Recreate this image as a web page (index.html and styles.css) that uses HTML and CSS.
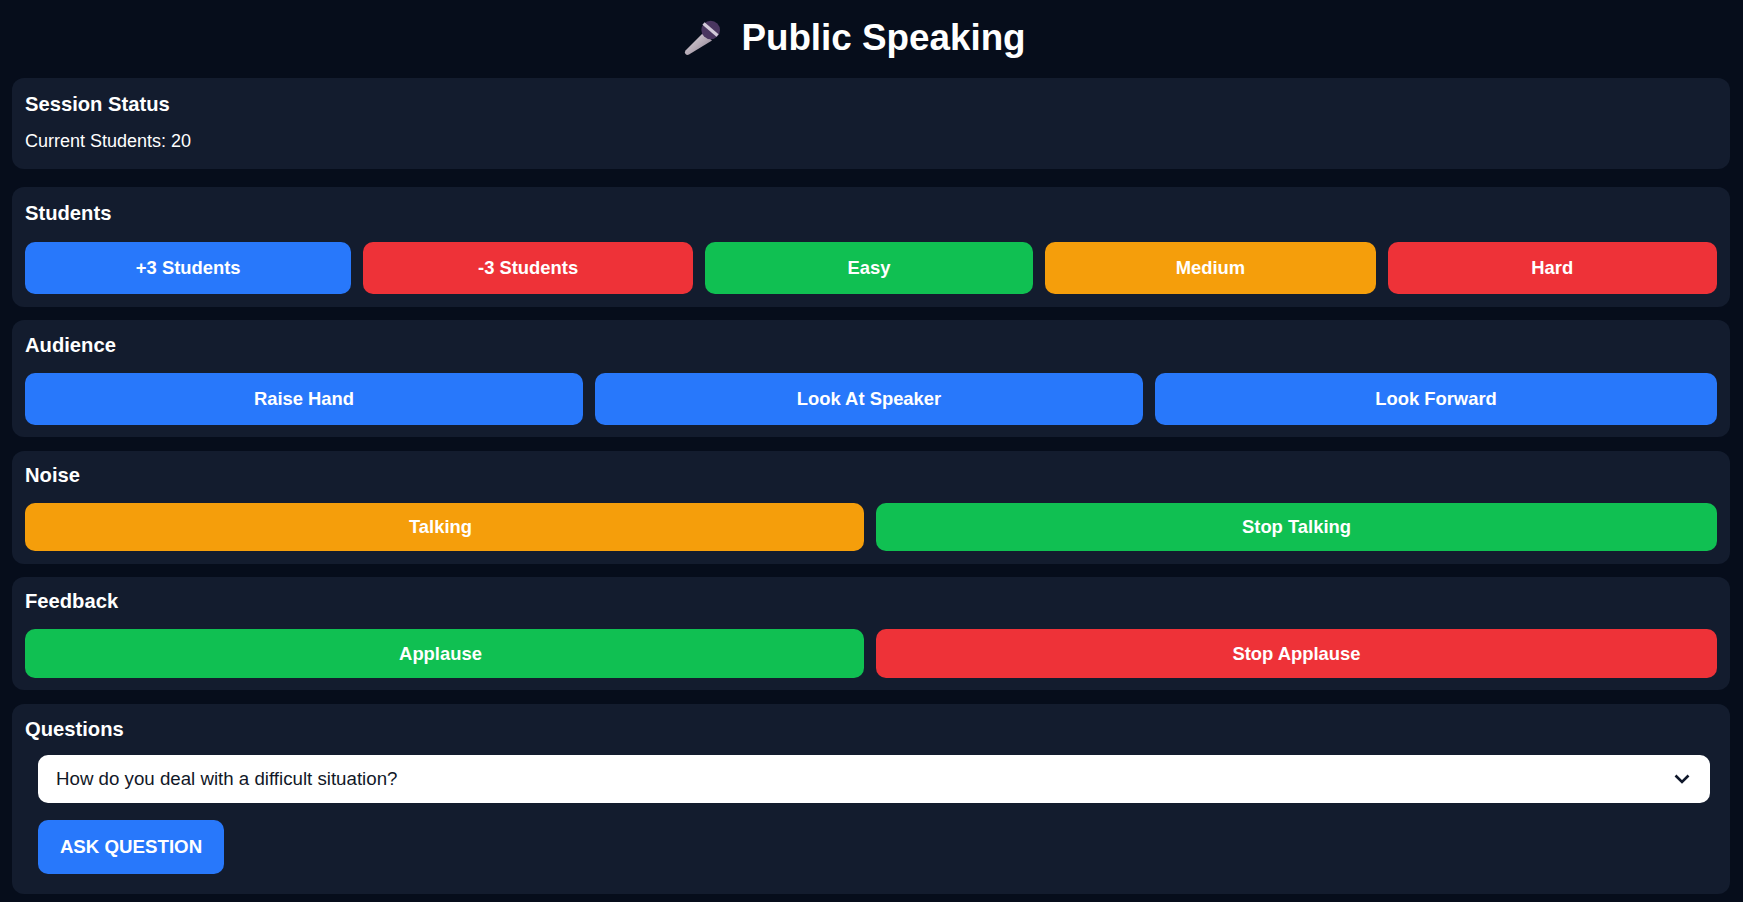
FILE: index.html
```html
<!DOCTYPE html>
<html lang="en">
<head>
<meta charset="utf-8">
<title>Public Speaking</title>
<link rel="stylesheet" href="styles.css">
</head>
<body>
<h1 class="title">
  <svg class="mic" viewBox="0 0 48 44" aria-hidden="true">
    <defs>
      <linearGradient id="h" x1="0" y1="0" x2="1" y2="1"><stop offset="0" stop-color="#e4dee4"/><stop offset="0.55" stop-color="#b3a8b4"/><stop offset="1" stop-color="#7d7384"/></linearGradient>
    </defs>
    <path d="M24 17 L33 24.500 L10 38.500 Q8 39.500 6.500 38 Q5 36.500 6.500 34.500Z" fill="url(#h)"/>
    <circle cx="31.700" cy="14" r="9.300" fill="#4a3660"/>
    <path d="M24.500 7.500 L38.500 19.500" stroke="#d2cad9" stroke-width="3.200" fill="none"/>
  </svg>
  <span>Public Speaking</span>
</h1>
<section class="panel status">
  <h2>Session Status</h2>
  <p>Current Students: 20</p>
</section>
<section class="panel students">
  <h2>Students</h2>
  <div class="row">
    <button class="btn blue">+3 Students</button>
    <button class="btn red">-3 Students</button>
    <button class="btn green">Easy</button>
    <button class="btn amber">Medium</button>
    <button class="btn red">Hard</button>
  </div>
</section>
<section class="panel audience">
  <h2>Audience</h2>
  <div class="row">
    <button class="btn blue">Raise Hand</button>
    <button class="btn blue">Look At Speaker</button>
    <button class="btn blue">Look Forward</button>
  </div>
</section>
<section class="panel noise">
  <h2>Noise</h2>
  <div class="row pair">
    <button class="btn amber">Talking</button>
    <button class="btn green">Stop Talking</button>
  </div>
</section>
<section class="panel feedback">
  <h2>Feedback</h2>
  <div class="row pair">
    <button class="btn green">Applause</button>
    <button class="btn red">Stop Applause</button>
  </div>
</section>
<section class="panel questions">
  <h2>Questions</h2>
  <div class="select">
    <span>How do you deal with a difficult situation?</span>
    <svg class="chev" viewBox="0 0 16 10" aria-hidden="true"><path d="M1.500 1.500 L8 8 L14.500 1.500" fill="none" stroke="#0f172a" stroke-width="2.600"/></svg>
  </div>
  <button class="ask">ASK QUESTION</button>
</section>
</body>
</html>
```
FILE: styles.css
```css
* { box-sizing: border-box; }
html, body { height: 100%; }
body {
  margin: 0;
  padding: 0 13px 0 12px;
  background: #060d1b;
  color: #fff;
  font-family: "Liberation Sans", Arial, sans-serif;
  overflow: hidden;
}
.title {
  margin: 0;
  height: 78px;
  padding: 0 37px 3px 0;
  display: flex;
  align-items: center;
  justify-content: center;
  gap: 14px;
  font-size: 36.800px;
  font-weight: 700;
}
.mic { width: 48px; height: 44px; }
.panel {
  background: #131c2e;
  border-radius: 12px;
  padding: 12px 13px;
}
h2 {
  margin: 0;
  font-size: 20.200px;
  line-height: 26px;
  font-weight: 700;
}
.status { height: 91px; margin-bottom: 18px; padding-top: 13px; }
.status h2 { margin-bottom: 12px; }
.status p { margin: 0; font-size: 18px; line-height: 24px; }
.students { height: 120px; margin-bottom: 13px; padding-top: 13px; }
.students h2 { margin-bottom: 16px; }
.audience { height: 117px; margin-bottom: 14px; }
.audience h2 { margin-bottom: 15px; }
.noise { height: 113px; margin-bottom: 13px; padding-top: 11px; }
.noise h2 { margin-bottom: 15px; }
.feedback { height: 113px; margin-bottom: 14px; padding-top: 11px; }
.feedback h2 { margin-bottom: 15px; }
.questions { height: 190px; }
.questions h2 { margin-bottom: 13px; }
.row { display: grid; gap: 12px; }
.students .row { grid-template-columns: 326fr 329fr 328fr 330fr 329fr; }
.audience .row { grid-template-columns: 558fr 548fr 562fr; }
.row.pair { grid-template-columns: 839fr 841fr; }
.btn {
  height: 52px;
  padding: 0;
  border: 0;
  border-radius: 10px;
  color: #fff;
  font: 700 18.400px "Liberation Sans", Arial, sans-serif;
}
.noise .btn { height: 48px; }
.feedback .btn { height: 49px; }
.pair .btn:first-child { padding-right: 8px; }
.blue { background: #2878fb; }
.red { background: #ee3238; }
.green { background: #10c052; }
.amber { background: #f59e0b; }
.select {
  margin: 0 7px 0 13px;
  height: 48px;
  background: #fff;
  color: #111827;
  border-radius: 10px;
  display: flex;
  align-items: center;
  justify-content: space-between;
  padding: 0 20px 0 18px;
  font-size: 18.700px;
}
.chev { width: 16px; height: 10px; }
.ask {
  display: block;
  margin: 17px 0 0 13px;
  width: 186px;
  height: 54px;
  padding: 0;
  border: 0;
  border-radius: 10px;
  background: #2878fb;
  color: #fff;
  font: 700 18.700px "Liberation Sans", Arial, sans-serif;
}
```
